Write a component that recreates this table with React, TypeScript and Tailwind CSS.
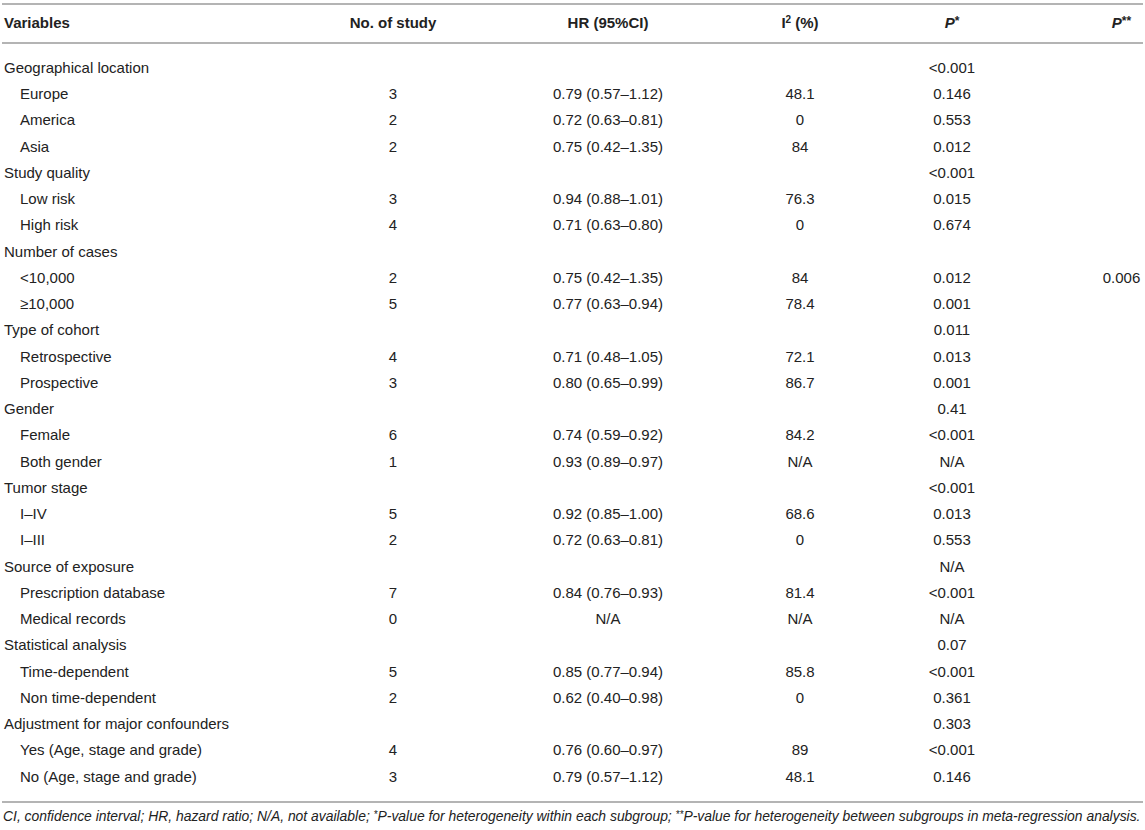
type Row = {
    label: string
    sub?: boolean
    n?: string
    hr?: string
    i2?: string
    p?: string
    pp?: string
}

const rows: Row[] = [
    { label: "Geographical location", p: "<0.001" },
    { label: "Europe", sub: true, n: "3", hr: "0.79 (0.57–1.12)", i2: "48.1", p: "0.146" },
    { label: "America", sub: true, n: "2", hr: "0.72 (0.63–0.81)", i2: "0", p: "0.553" },
    { label: "Asia", sub: true, n: "2", hr: "0.75 (0.42–1.35)", i2: "84", p: "0.012" },
    { label: "Study quality", p: "<0.001" },
    { label: "Low risk", sub: true, n: "3", hr: "0.94 (0.88–1.01)", i2: "76.3", p: "0.015" },
    { label: "High risk", sub: true, n: "4", hr: "0.71 (0.63–0.80)", i2: "0", p: "0.674" },
    { label: "Number of cases" },
    { label: "<10,000", sub: true, n: "2", hr: "0.75 (0.42–1.35)", i2: "84", p: "0.012", pp: "0.006" },
    { label: "≥10,000", sub: true, n: "5", hr: "0.77 (0.63–0.94)", i2: "78.4", p: "0.001" },
    { label: "Type of cohort", p: "0.011" },
    { label: "Retrospective", sub: true, n: "4", hr: "0.71 (0.48–1.05)", i2: "72.1", p: "0.013" },
    { label: "Prospective", sub: true, n: "3", hr: "0.80 (0.65–0.99)", i2: "86.7", p: "0.001" },
    { label: "Gender", p: "0.41" },
    { label: "Female", sub: true, n: "6", hr: "0.74 (0.59–0.92)", i2: "84.2", p: "<0.001" },
    { label: "Both gender", sub: true, n: "1", hr: "0.93 (0.89–0.97)", i2: "N/A", p: "N/A" },
    { label: "Tumor stage", p: "<0.001" },
    { label: "I–IV", sub: true, n: "5", hr: "0.92 (0.85–1.00)", i2: "68.6", p: "0.013" },
    { label: "I–III", sub: true, n: "2", hr: "0.72 (0.63–0.81)", i2: "0", p: "0.553" },
    { label: "Source of exposure", p: "N/A" },
    { label: "Prescription database", sub: true, n: "7", hr: "0.84 (0.76–0.93)", i2: "81.4", p: "<0.001" },
    { label: "Medical records", sub: true, n: "0", hr: "N/A", i2: "N/A", p: "N/A" },
    { label: "Statistical analysis", p: "0.07" },
    { label: "Time-dependent", sub: true, n: "5", hr: "0.85 (0.77–0.94)", i2: "85.8", p: "<0.001" },
    { label: "Non time-dependent", sub: true, n: "2", hr: "0.62 (0.40–0.98)", i2: "0", p: "0.361" },
    { label: "Adjustment for major confounders", p: "0.303" },
    { label: "Yes (Age, stage and grade)", sub: true, n: "4", hr: "0.76 (0.60–0.97)", i2: "89", p: "<0.001" },
    { label: "No (Age, stage and grade)", sub: true, n: "3", hr: "0.79 (0.57–1.12)", i2: "48.1", p: "0.146" },
]

const cols = "grid grid-cols-[328px_126px_304px_80px_224px_34px_47px]"

const App = () => {
    return (
        <div
            className="w-[1145px] h-[830px] bg-white px-[2px] pt-[3px] text-[15px] text-[#222]"
            style={{ fontFamily: '"Liberation Sans", Arial, sans-serif' }}
        >
            <div className="h-[2px] bg-[#b4b4b4]" />
            <div className={`${cols} h-[37px] items-center font-bold`}>
                <div className="pl-[2px]">Variables</div>
                <div className="text-center">No. of study</div>
                <div className="text-center">HR (95%CI)</div>
                <div className="text-center">
                    I<sup className="text-[10px]">2</sup> (%)
                </div>
                <div className="text-center">
                    <i>P</i>
                    <span className="relative top-[-3px] text-[12px]">*</span>
                </div>
                <div />
                <div className="text-center">
                    <i>P</i>
                    <span className="relative top-[-3px] text-[12px]">**</span>
                </div>
            </div>
            <div className="h-[2px] bg-[#b4b4b4]" />
            <div className="pt-[11px] pb-[11px]">
                {rows.map((r, i) => (
                    <div key={i} className={`${cols} h-[26.26px] items-center`}>
                        <div className={r.sub ? "pl-[18px]" : "pl-[2px]"}>{r.label}</div>
                        <div className="text-center">{r.n}</div>
                        <div className="text-center">{r.hr}</div>
                        <div className="text-center">{r.i2}</div>
                        <div className="text-center">{r.p}</div>
                        <div />
                        <div className="text-center">{r.pp}</div>
                    </div>
                ))}
            </div>
            <div className="h-[2px] bg-[#b4b4b4]" />
            <p className="pt-[3px] pl-[1px] text-[13.9px] italic leading-[20px] whitespace-nowrap">
                CI, confidence interval; HR, hazard ratio; N/A, not available; <span className="text-[10px] relative top-[-3px]">*</span>P-value for heterogeneity within each subgroup; <span className="text-[10px] relative top-[-3px]">**</span>P-value for heterogeneity between subgroups in meta-regression analysis.
            </p>
        </div>
    )
}

export default App
